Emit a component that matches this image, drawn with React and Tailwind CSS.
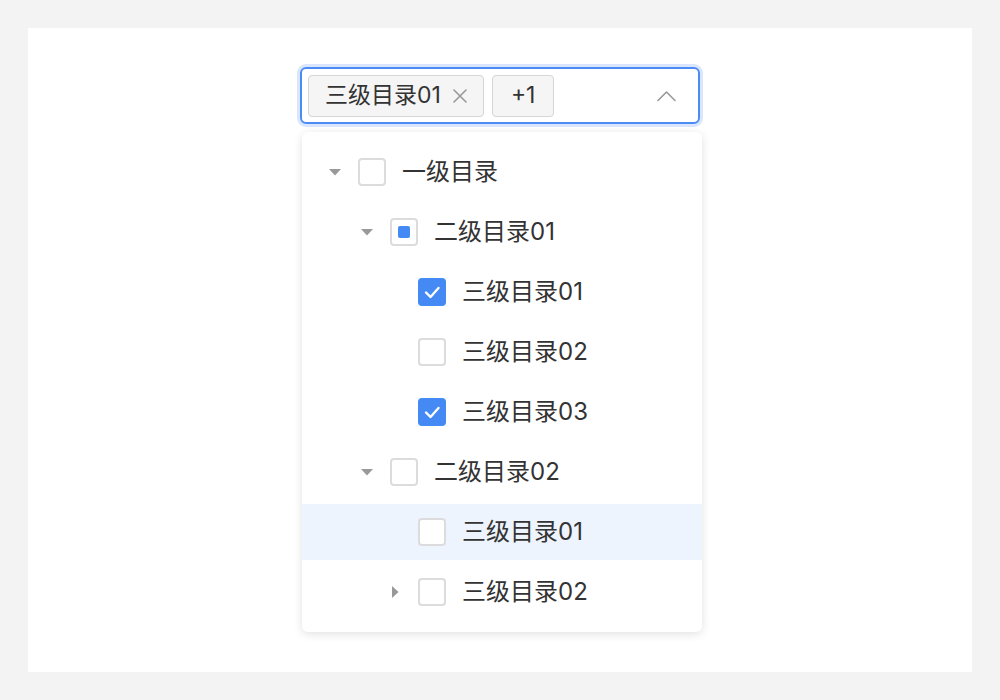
const rows = [
  { label: '一级目录', pad: 'pl-[21px]', caret: 'down', state: 'empty' },
  { label: '二级目录01', pad: 'pl-[53px]', caret: 'down', state: 'partial' },
  { label: '三级目录01', pad: 'pl-[81px]', caret: null, state: 'checked' },
  { label: '三级目录02', pad: 'pl-[81px]', caret: null, state: 'empty' },
  { label: '三级目录03', pad: 'pl-[81px]', caret: null, state: 'checked' },
  { label: '二级目录02', pad: 'pl-[53px]', caret: 'down', state: 'empty' },
  { label: '三级目录01', pad: 'pl-[81px]', caret: null, state: 'empty', active: true },
  { label: '三级目录02', pad: 'pl-[81px]', caret: 'right', state: 'empty' },
];

const Caret = ({ dir }) => {
  if (!dir) return <span className="w-6 h-6" />;
  return (
    <span className="w-6 h-6 flex items-center justify-center">
      {dir === 'down' ? (
        <svg width="14" height="8" viewBox="0 0 14 8">
          <path d="M1 1 L13 1 L7 7.5 Z" fill="#999999" />
        </svg>
      ) : (
        <svg width="8" height="14" viewBox="0 0 8 14">
          <path d="M1 1 L7.5 7 L1 13 Z" fill="#999999" />
        </svg>
      )}
    </span>
  );
};

const Checkbox = ({ state }) => {
  if (state === 'checked') {
    return (
      <span className="w-7 h-7 rounded-[4px] bg-[#4589f5] flex items-center justify-center">
        <svg width="28" height="28" viewBox="0 0 28 28">
          <polyline points="8,14.5 12.5,19 20.5,10" fill="none" stroke="#ffffff" strokeWidth="2.4" strokeLinecap="round" strokeLinejoin="round" />
        </svg>
      </span>
    );
  }
  return (
    <span className="w-7 h-7 rounded-[4px] border-2 border-[#dcdcdc] bg-white flex items-center justify-center">
      {state === 'partial' && <span className="w-3 h-3 rounded-[2px] bg-[#4589f5]" />}
    </span>
  );
};

const Tag = ({ children }) => (
  <span className="h-[42px] px-4 flex items-center gap-3 rounded-[4px] border-[1.5px] border-[#d6d6d6] bg-[#f5f5f5] text-[23px] text-[#333333]">
    {children}
  </span>
);

export default function App() {
  return (
    <div className="w-[1000px] h-[700px] bg-[#f3f3f3] p-7 font-['Inter','Noto_Sans_CJK_SC',sans-serif]">
      <div className="w-full h-full bg-white flex flex-col items-center pt-[39px]">
        <div className="w-[404px] pl-[2px]">
          <div className="w-[400px] h-[57px] rounded-[6px] border-2 border-[#4b8bf5] ring-[3px] ring-[#d9e6fd] flex items-center pl-[6px] pr-[22px] gap-2">
            <Tag>
              三级目录01
              <svg width="14" height="14" viewBox="0 0 14 14">
                <path d="M1 1 L13 13 M13 1 L1 13" stroke="#999999" strokeWidth="1.6" strokeLinecap="round" />
              </svg>
            </Tag>
            <Tag>
              <span className="px-[2px]">+1</span>
            </Tag>
            <span className="ml-auto">
              <svg width="19" height="12" viewBox="0 0 19 12">
                <polyline points="1,10.5 9.5,2 18,10.5" fill="none" stroke="#999999" strokeWidth="1.6" strokeLinecap="round" strokeLinejoin="round" />
              </svg>
            </span>
          </div>
          <div className="w-[400px] mt-2 ml-[2px] bg-white rounded-[6px] shadow-[0_2px_10px_rgba(0,0,0,0.12)] py-3 flex flex-col gap-1">
            {rows.map((r, i) => (
              <div
                key={i}
                className={`h-14 flex items-center ${r.pad} ${r.active ? 'bg-[#edf4fe]' : ''}`}
              >
                <Caret dir={r.caret} />
                <span className="ml-[11px]">
                  <Checkbox state={r.state} />
                </span>
                <span className="ml-4 text-[24px] text-[#333333]">{r.label}</span>
              </div>
            ))}
          </div>
        </div>
      </div>
    </div>
  );
}
